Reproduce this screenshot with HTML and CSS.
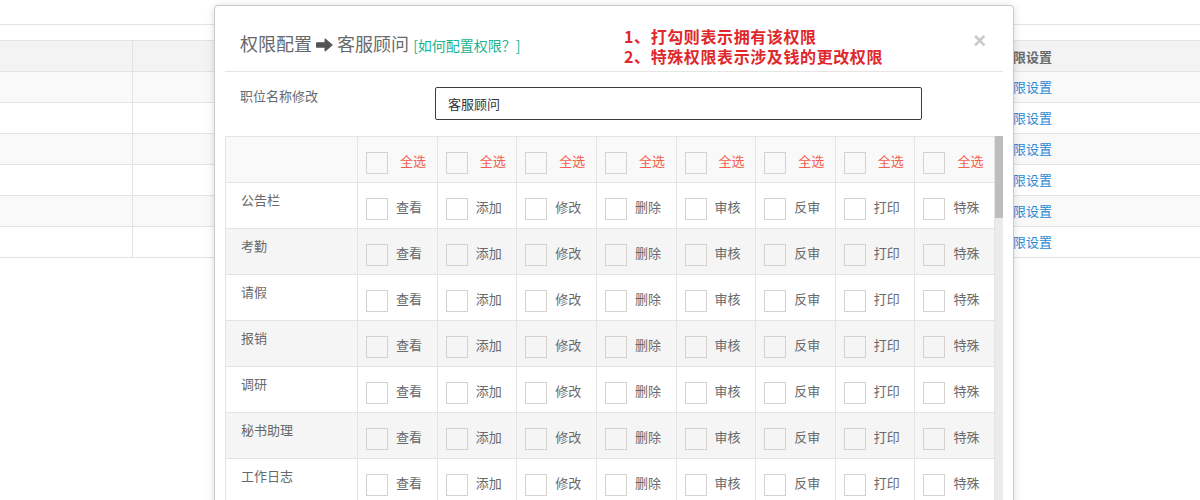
FILE: index.html
```html
<!DOCTYPE html>
<html lang="zh-CN">
<head>
<meta charset="utf-8">
<title>权限配置</title>
<link rel="stylesheet" href="styles.css">
</head>
<body>
<div class="page">
  <div class="topline"></div>
  <div class="list">
    <div class="c h"></div><div class="c h"></div><div class="c h">权限设置</div>
    <div class="c alt"></div><div class="c alt"></div><div class="c alt"><a class="lk">权限设置</a></div>
    <div class="c"></div><div class="c"></div><div class="c"><a class="lk">权限设置</a></div>
    <div class="c alt"></div><div class="c alt"></div><div class="c alt"><a class="lk">权限设置</a></div>
    <div class="c"></div><div class="c"></div><div class="c"><a class="lk">权限设置</a></div>
    <div class="c alt"></div><div class="c alt"></div><div class="c alt"><a class="lk">权限设置</a></div>
    <div class="c"></div><div class="c"></div><div class="c"><a class="lk">权限设置</a></div>
  </div>
</div>

<div class="modal">
  <div class="modal-header">
    <h4 class="title">权限配置 <svg class="arrow" viewBox="0 0 17 14" width="17" height="14"><path d="M0.5 4.8H9V0.8L16.4 7 9 13.2V9.2H0.5z" fill="#555" stroke="#555" stroke-width="1" stroke-linejoin="round"/></svg> 客服顾问 <a class="help">[如何配置权限？]</a></h4>
    <div class="tips"><div class="tip">1、打勾则表示拥有该权限</div><div class="tip">2、特殊权限表示涉及钱的更改权限</div></div>
    <span class="close">×</span>
  </div>
  <div class="form-row">
    <label class="flabel">职位名称修改</label>
    <div class="input">客服顾问</div>
  </div>
  <div class="table-wrap">
    <div class="perm">
      <div class="row hd">
        <div class="cell"></div>
        <div class="cell ck"><i class="box"></i><span>全选</span></div>
        <div class="cell ck"><i class="box"></i><span>全选</span></div>
        <div class="cell ck"><i class="box"></i><span>全选</span></div>
        <div class="cell ck"><i class="box"></i><span>全选</span></div>
        <div class="cell ck"><i class="box"></i><span>全选</span></div>
        <div class="cell ck"><i class="box"></i><span>全选</span></div>
        <div class="cell ck"><i class="box"></i><span>全选</span></div>
        <div class="cell ck"><i class="box"></i><span>全选</span></div>
      </div>
      <div class="row">
        <div class="cell name">公告栏</div>
        <div class="cell ck"><i class="box"></i><span>查看</span></div>
        <div class="cell ck"><i class="box"></i><span>添加</span></div>
        <div class="cell ck"><i class="box"></i><span>修改</span></div>
        <div class="cell ck"><i class="box"></i><span>删除</span></div>
        <div class="cell ck"><i class="box"></i><span>审核</span></div>
        <div class="cell ck"><i class="box"></i><span>反审</span></div>
        <div class="cell ck"><i class="box"></i><span>打印</span></div>
        <div class="cell ck"><i class="box"></i><span>特殊</span></div>
      </div>
      <div class="row alt">
        <div class="cell name">考勤</div>
        <div class="cell ck"><i class="box"></i><span>查看</span></div>
        <div class="cell ck"><i class="box"></i><span>添加</span></div>
        <div class="cell ck"><i class="box"></i><span>修改</span></div>
        <div class="cell ck"><i class="box"></i><span>删除</span></div>
        <div class="cell ck"><i class="box"></i><span>审核</span></div>
        <div class="cell ck"><i class="box"></i><span>反审</span></div>
        <div class="cell ck"><i class="box"></i><span>打印</span></div>
        <div class="cell ck"><i class="box"></i><span>特殊</span></div>
      </div>
      <div class="row">
        <div class="cell name">请假</div>
        <div class="cell ck"><i class="box"></i><span>查看</span></div>
        <div class="cell ck"><i class="box"></i><span>添加</span></div>
        <div class="cell ck"><i class="box"></i><span>修改</span></div>
        <div class="cell ck"><i class="box"></i><span>删除</span></div>
        <div class="cell ck"><i class="box"></i><span>审核</span></div>
        <div class="cell ck"><i class="box"></i><span>反审</span></div>
        <div class="cell ck"><i class="box"></i><span>打印</span></div>
        <div class="cell ck"><i class="box"></i><span>特殊</span></div>
      </div>
      <div class="row alt">
        <div class="cell name">报销</div>
        <div class="cell ck"><i class="box"></i><span>查看</span></div>
        <div class="cell ck"><i class="box"></i><span>添加</span></div>
        <div class="cell ck"><i class="box"></i><span>修改</span></div>
        <div class="cell ck"><i class="box"></i><span>删除</span></div>
        <div class="cell ck"><i class="box"></i><span>审核</span></div>
        <div class="cell ck"><i class="box"></i><span>反审</span></div>
        <div class="cell ck"><i class="box"></i><span>打印</span></div>
        <div class="cell ck"><i class="box"></i><span>特殊</span></div>
      </div>
      <div class="row">
        <div class="cell name">调研</div>
        <div class="cell ck"><i class="box"></i><span>查看</span></div>
        <div class="cell ck"><i class="box"></i><span>添加</span></div>
        <div class="cell ck"><i class="box"></i><span>修改</span></div>
        <div class="cell ck"><i class="box"></i><span>删除</span></div>
        <div class="cell ck"><i class="box"></i><span>审核</span></div>
        <div class="cell ck"><i class="box"></i><span>反审</span></div>
        <div class="cell ck"><i class="box"></i><span>打印</span></div>
        <div class="cell ck"><i class="box"></i><span>特殊</span></div>
      </div>
      <div class="row alt">
        <div class="cell name">秘书助理</div>
        <div class="cell ck"><i class="box"></i><span>查看</span></div>
        <div class="cell ck"><i class="box"></i><span>添加</span></div>
        <div class="cell ck"><i class="box"></i><span>修改</span></div>
        <div class="cell ck"><i class="box"></i><span>删除</span></div>
        <div class="cell ck"><i class="box"></i><span>审核</span></div>
        <div class="cell ck"><i class="box"></i><span>反审</span></div>
        <div class="cell ck"><i class="box"></i><span>打印</span></div>
        <div class="cell ck"><i class="box"></i><span>特殊</span></div>
      </div>
      <div class="row">
        <div class="cell name">工作日志</div>
        <div class="cell ck"><i class="box"></i><span>查看</span></div>
        <div class="cell ck"><i class="box"></i><span>添加</span></div>
        <div class="cell ck"><i class="box"></i><span>修改</span></div>
        <div class="cell ck"><i class="box"></i><span>删除</span></div>
        <div class="cell ck"><i class="box"></i><span>审核</span></div>
        <div class="cell ck"><i class="box"></i><span>反审</span></div>
        <div class="cell ck"><i class="box"></i><span>打印</span></div>
        <div class="cell ck"><i class="box"></i><span>特殊</span></div>
      </div>
    </div>
    <div class="sb"><div class="thumb"></div></div>
  </div>
</div>
</body>
</html>
```
FILE: styles.css
```css
html, body {
  margin: 0;
  height: 500px;
  overflow: hidden;
}
body {
  position: relative;
  background: #fff;
  font-family: "Noto Sans CJK SC", "Open Sans", sans-serif;
  font-size: 13px;
  color: #676a6c;
}

/* background page */
.page { padding-top: 24px; }
.topline { border-top: 1px solid #e3e3e3; height: 15px; }
.list {
  display: grid;
  grid-template-columns: 132px 856px 1fr;
  gap: 1px;
  background: #e3e3e3;
  border-top: 1px solid #e3e3e3;
  border-bottom: 1px solid #e3e3e3;
}
.list .c {
  height: 30px;
  line-height: 30px;
  padding: 0 10px;
  background: #fff;
  box-sizing: border-box;
}
.list .h { background: #f3f3f3; font-weight: bold; line-height: 32px; }
.list .alt { background: #f9f9f9; }
.lk { color: #2b8ad6; text-decoration: none; }

/* modal */
.modal {
  position: absolute;
  left: 214px;
  top: 5px;
  width: 800px;
  height: 560px;
  box-sizing: border-box;
  padding: 0 10px;
  background: #fff;
  border: 1px solid #c9c9c9;
  border-radius: 4px;
  box-shadow: 0 1px 8px rgba(0, 0, 0, 0.14);
  overflow: hidden;
}
.modal-header {
  height: 65px;
  border-bottom: 1px solid #e5e5e5;
  display: grid;
  grid-template-columns: 384px 1fr auto;
  align-items: start;
  padding: 0 17px 0 15px;
}
.title {
  margin: 25px 0 0;
  font-size: 18px;
  font-weight: normal;
  line-height: 24px;
  color: #676a6c;
  white-space: nowrap;
}
.arrow { vertical-align: -1px; }
.help {
  font-size: 14px;
  color: #1ab394;
  text-decoration: none;
}
.tips {
  margin-top: 21px;
  font-size: 16px;
  font-weight: bold;
  letter-spacing: 0.6px;
  color: #e0282c;
  white-space: nowrap;
}
.tip {
  height: 20px;
  line-height: 18px;
}
.close {
  margin-top: 23px;
  font-family: "Liberation Sans", Arial, sans-serif;
  font-size: 22px;
  line-height: 24px;
  font-weight: bold;
  color: #c9c9c9;
}

.form-row {
  display: grid;
  grid-template-columns: 210px 487px;
  margin-top: 15px;
}
.flabel {
  padding-left: 15px;
  line-height: 20px;
  margin-top: -1px;
}
.input {
  height: 33px;
  box-sizing: border-box;
  border: 1px solid #3d3d3d;
  border-radius: 2px;
  padding-left: 12px;
  line-height: 31px;
  color: #333;
}

.table-wrap {
  display: flex;
  margin-top: 16px;
}
.perm {
  width: 770px;
  box-sizing: border-box;
  display: grid;
  grid-template-columns: 131px repeat(8, 1fr);
  gap: 1px;
  background: #e4e4e4;
  border: 1px solid #e4e4e4;
}
.row { display: contents; }
.cell {
  height: 45px;
  box-sizing: border-box;
  background: #fff;
}
.hd .cell { background: #f9f9f9; }
.alt .cell { background: #f5f5f5; }
.name {
  padding: 7px 15px 0;
  line-height: 20px;
}
.ck {
  display: flex;
  align-items: flex-start;
  padding: 15px 0 0 8px;
}
.ck .box {
  display: block;
  width: 22px;
  height: 22px;
  box-sizing: border-box;
  border: 1px solid #d6d1cc;
}
.ck span {
  margin-left: 8px;
  line-height: 18px;
}
.hd .ck span {
  margin-left: 12px;
  color: #f4604e;
}
.sb {
  width: 8px;
  background: #ebebeb;
}
.thumb {
  height: 82px;
  background: #bdbdbd;
}
```
